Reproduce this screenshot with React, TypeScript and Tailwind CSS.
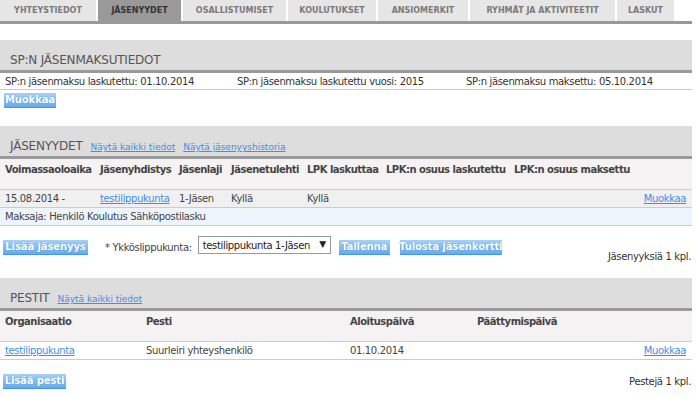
import React from "react";

const tabs = ["YHTEYSTIEDOT", "JÄSENYYDET", "OSALLISTUMISET", "KOULUTUKSET", "ANSIOMERKIT", "RYHMÄT JA AKTIVITEETIT", "LASKUT"];
const tabW = [96, 83, 103, 88, 90, 145, 57];

function Btn({ children, w }: { children: React.ReactNode; w: string }) {
  return (
    <span className={`inline-flex h-[15px] items-center justify-center whitespace-nowrap bg-gradient-to-b from-[#a3d2fb] to-[#62abee] border-b border-[#4d94d8] text-white font-bold text-[10px] tracking-[-0.1px] leading-none [text-shadow:0_0_1px_#3a7cc0] ${w}`}>
      {children}
    </span>
  );
}

function SectionHead({ title, links }: { title: string; links?: string[] }) {
  return (
    <div className="h-[33px] bg-[#dddddd] border-b-[3px] border-[#999] flex items-end pb-[4px] pl-[10px] gap-[8px]">
      <span className="text-[12px] tracking-[-0.2px] text-[#555] leading-none">{title}</span>
      {links?.map((l) => (
        <span key={l} className="text-[9px] tracking-[0px] text-[#3d8ee8] underline leading-none">{l}</span>
      ))}
    </div>
  );
}

export default function App() {
  return (
    <div className="w-[692px] bg-white text-[#333] text-[10px] tracking-[-0.35px] whitespace-nowrap" style={{ fontFamily: '"DejaVu Sans", Verdana, sans-serif' }}>
      {/* tabs */}
      <div className="flex h-[24px] border-b-[3px] border-[#999]">
        {tabs.map((t, i) => (
          <div
            key={t}
            style={{ width: tabW[i] }}
            className={`flex items-center justify-center text-[8px] font-bold tracking-[0px] mr-[2px] ${i === 1 ? "bg-[#999] text-[#333]" : "bg-[#e6e6e6] text-[#7a7a7a]"}`}
          >
            {t}
          </div>
        ))}
      </div>

      {/* section 1 */}
      <div className="mt-[16px]">
        <SectionHead title="SP:N JÄSENMAKSUTIEDOT" />
        <div className="h-[17px] flex items-center border-b border-[#ccc]">
          <span className="pl-[5px] w-[237px]">SP:n jäsenmaksu laskutettu: 01.10.2014</span>
          <span className="w-[229px]">SP:n jäsenmaksu laskutettu vuosi: 2015</span>
          <span>SP:n jäsenmaksu maksettu: 05.10.2014</span>
        </div>
        <div className="pt-[2px] pl-[4px]">
          <Btn w="w-[52px]">Muokkaa</Btn>
        </div>
      </div>

      {/* section 2 */}
      <div className="mt-[18px]">
        <SectionHead title="JÄSENYYDET" links={["Näytä kaikki tiedot", "Näytä jäsenyyshistoria"]} />
        <div className="h-[31px] bg-[#f4f2f2] border-b border-[#ccc] flex items-start pt-[3px] font-bold tracking-[-0.5px] text-[#444]">
          <span className="pl-[5px] w-[100px]">Voimassaoloaika</span>
          <span className="w-[79px]">Jäsenyhdistys</span>
          <span className="w-[52px]">Jäsenlaji</span>
          <span className="w-[76px]">Jäsenetulehti</span>
          <span className="w-[79px]">LPK laskuttaa</span>
          <span className="w-[128px]">LPK:n osuus laskutettu</span>
          <span>LPK:n osuus maksettu</span>
        </div>
        <div className="h-[18px] bg-[#f0f0f0] border-b border-[#ccc] flex items-center text-[#444]">
          <span className="pl-[5px] w-[100px]">15.08.2014 -</span>
          <span className="w-[79px] text-[#3d8ee8] underline">testilippukunta</span>
          <span className="w-[52px]">1-Jäsen</span>
          <span className="w-[76px]">Kyllä</span>
          <span className="w-[79px]">Kyllä</span>
          <span className="ml-auto pr-[6px] text-[#3d8ee8] underline">Muokkaa</span>
        </div>
        <div className="h-[18px] bg-[#eef4fc] border-b border-[#ccc] flex items-center pl-[5px] text-[#444]">
          Maksaja: Henkilö Koulutus Sähköpostilasku
        </div>
        <div className="flex items-start mt-[10px]">
          <div className="pl-[3px] pt-[3px]">
            <Btn w="w-[85px]">Lisää jäsenyys</Btn>
          </div>
          <span className="ml-[17px] pt-[4px] text-[#444]">* Ykköslippukunta:</span>
          <div className="ml-[6px] w-[133px] h-[18px] border border-[#999] bg-white flex items-center justify-between px-[4px] text-[#222]">
            <span>testilippukunta 1-Jäsen</span>
            <span className="text-[9px]">▼</span>
          </div>
          <div className="ml-[8px] pt-[3px]">
            <Btn w="w-[51px]">Tallenna</Btn>
          </div>
          <div className="ml-[10px] pt-[3px]">
            <Btn w="w-[102px]">Tulosta jäsenkortti</Btn>
          </div>
          <span className="ml-auto pt-[13px] pr-[1px]">Jäsenyyksiä 1 kpl.</span>
        </div>
      </div>

      {/* section 3 */}
      <div className="mt-[14px]">
        <SectionHead title="PESTIT" links={["Näytä kaikki tiedot"]} />
        <div className="h-[31px] bg-[#f4f2f2] border-b border-[#ccc] flex items-start pt-[3px] font-bold tracking-[-0.5px] text-[#444]">
          <span className="pl-[5px] w-[146px]">Organisaatio</span>
          <span className="w-[204px]">Pesti</span>
          <span className="w-[127px]">Aloituspäivä</span>
          <span>Päättymispäivä</span>
        </div>
        <div className="h-[18px] bg-white border-b border-[#ccc] flex items-center text-[#444]">
          <span className="pl-[5px] w-[146px] text-[#3d8ee8] underline">testilippukunta</span>
          <span className="w-[204px]">Suurleiri yhteyshenkilö</span>
          <span className="w-[127px]">01.10.2014</span>
          <span className="ml-auto pr-[6px] text-[#3d8ee8] underline">Muokkaa</span>
        </div>
        <div className="flex items-start mt-[13px]">
          <div className="pl-[3px]">
            <Btn w="w-[63px]">Lisää pesti</Btn>
          </div>
          <span className="ml-auto pt-[1px] pr-[1px]">Pestejä 1 kpl.</span>
        </div>
      </div>
    </div>
  );
}
